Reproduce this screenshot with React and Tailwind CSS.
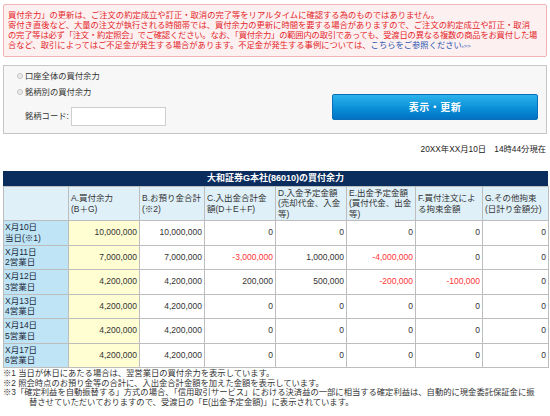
import React from 'react';

const rows = [
  { d: 'X月10日', s: '当日(※1)', v: ['10,000,000', '10,000,000', '0', '0', '0', '0', '0'] },
  { d: 'X月11日', s: '2営業日', v: ['7,000,000', '7,000,000', '-3,000,000', '1,000,000', '-4,000,000', '0', '0'] },
  { d: 'X月12日', s: '3営業日', v: ['4,200,000', '4,200,000', '200,000', '500,000', '-200,000', '-100,000', '0'] },
  { d: 'X月13日', s: '4営業日', v: ['4,200,000', '4,200,000', '0', '0', '0', '0', '0'] },
  { d: 'X月14日', s: '5営業日', v: ['4,200,000', '4,200,000', '0', '0', '0', '0', '0'] },
  { d: 'X月17日', s: '6営業日', v: ['4,200,000', '4,200,000', '0', '0', '0', '0', '0'] },
];

const heads = [
  ['A.買付余力', '(B＋G)'],
  ['B.お預り金合計', '(※2)'],
  ['C.入出金合計金', '額(D＋E＋F)'],
  ['D.入金予定金額', '(売却代金、入金', '等)'],
  ['E.出金予定金額', '(買付代金、出金', '等)'],
  ['F.買付注文によ', 'る拘束金額'],
  ['G.その他拘束', '(日計り金額分)'],
];

const widths = ['w-[65px]', 'w-[71px]', 'w-[65px]', 'w-[71px]', 'w-[71px]', 'w-[69px]', 'w-[67px]', 'w-[66px]'];

const Radio = ({ label }) => (
  <div className="flex items-center h-[12px] gap-[2px]">
    <span className="w-[6px] h-[6px] rounded-full border border-[#c4c4c4] bg-[#ececec]" />
    <span>{label}</span>
  </div>
);

export default function App() {
  return (
    <div className="w-[550px] min-h-[416px] bg-white px-[3px] pt-[4px] font-['Liberation_Sans','Noto_Sans_CJK_JP',sans-serif] text-[8.3px] text-[#333]">
      {/* notice */}
      <div className="border border-[#f0b4b4] bg-[#fdf0f0] rounded-[2px] px-[4px] py-[5px] leading-[10px] text-[#e3262b] whitespace-nowrap">
        買付余力」の更新は、ご注文の約定成立や訂正・取消の完了等をリアルタイムに確認する為のものではありません。
        <br />
        寄付き直後など、大量の注文が執行される時間帯では、買付余力の更新に時間を要する場合がありますので、ご注文の約定成立や訂正・取消
        <br />
        <span className="tracking-[-0.2px]">
          の完了等は必ず「注文・約定照会」でご確認ください。なお、「買付余力」の範囲内の取引であっても、受渡日の異なる複数の商品をお買付した場
        </span>
        <br />
        合など、取引によってはご不足金が発生する場合があります。不足金が発生する事例については、
        <span className="text-[#2a55b0]">こちらをご参照ください<span className="text-[6px]">›&gt;&gt;</span></span>
      </div>

      {/* form */}
      <div className="mt-[8px] h-[69px] border border-[#c6c6c6] bg-[#f7f7f7] flex justify-between">
        <div className="pl-[13px] pt-[4px] flex flex-col">
          <Radio label="口座全体の買付余力" />
          <div className="mt-[4px]">
            <Radio label="銘柄別の買付余力" />
          </div>
          <div className="mt-[9px] flex items-center pl-[8px] gap-[2px]">
            <span>銘柄コード:</span>
            <div className="w-[95px] h-[19px] bg-white border border-[#cfcfcf]" />
          </div>
        </div>
        <div className="pr-[8px] pt-[28px]">
          <button className="w-[206px] h-[26px] rounded-[2px] border border-[#0a6fb8] bg-gradient-to-b from-[#2cb2ec] via-[#0b93da] to-[#0372c2] text-white font-bold text-[10px] tracking-[0.5px]">
            表示・更新
          </button>
        </div>
      </div>

      {/* date */}
      <div className="mt-[9px] h-[12px] leading-[12px] text-right pr-[1px] text-[#222]">
        20XX年XX月10日　14時44分現在
      </div>

      {/* table */}
      <div className="mt-[16px] w-[545px]">
        <div className="h-[15px] bg-[#0b2d5e] text-white font-bold text-[9px] leading-[15px] text-center">
          大和証券G本社(86010)の買付余力
        </div>
        <table className="w-[545px] table-fixed border-collapse">
          <colgroup>
            {widths.map((w, i) => (
              <col key={i} className={w} />
            ))}
          </colgroup>
          <thead>
            <tr className="h-[34px]">
              <th className="bg-[#dff0f8] border border-[#bdbdbd]" />
              {heads.map((h, i) => (
                <th key={i} className="bg-[#dff0f8] border border-[#bdbdbd] text-left font-normal align-middle px-[2px] leading-[10.5px] whitespace-nowrap text-[8.5px]">
                  {h.map((l, j) => (
                    <div key={j}>{l}</div>
                  ))}
                </th>
              ))}
            </tr>
          </thead>
          <tbody>
            {rows.map((r) => (
              <tr key={r.d} className="h-[24.5px]">
                <td className="bg-[#bfe4f5] border border-[#bdbdbd] px-[1px] leading-[10.5px] text-[8.5px] text-[#1d2a3a]">
                  <div>{r.d}</div>
                  <div>{r.s}</div>
                </td>
                {r.v.map((v, i) => (
                  <td
                    key={i}
                    className={
                      'border border-[#bdbdbd] text-right pr-[2px] text-[8.5px] ' +
                      (i === 0 ? 'bg-[#fffed3] ' : 'bg-white ') +
                      (v.startsWith('-') ? 'text-[#ff3434]' : 'text-[#333]')
                    }
                  >
                    {v}
                  </td>
                ))}
              </tr>
            ))}
          </tbody>
        </table>
      </div>

      {/* notes */}
      <div className="mt-[1px] leading-[9.5px] whitespace-nowrap text-[#333]">
        <div>※1 当日が休日にあたる場合は、翌営業日の買付余力を表示しています。</div>
        <div>※2 照会時点のお預り金等の合計に、入出金合計金額を加えた金額を表示しています。</div>
        <div>※3「確定利益を自動振替する」方式の場合、「信用取引サービス」における決済益の一部に相当する確定利益は、自動的に現金委託保証金に振</div>
        <div className="pl-[26px]">替させていただいておりますので、受渡日の「E(出金予定金額)」に表示されています。</div>
      </div>
    </div>
  );
}
